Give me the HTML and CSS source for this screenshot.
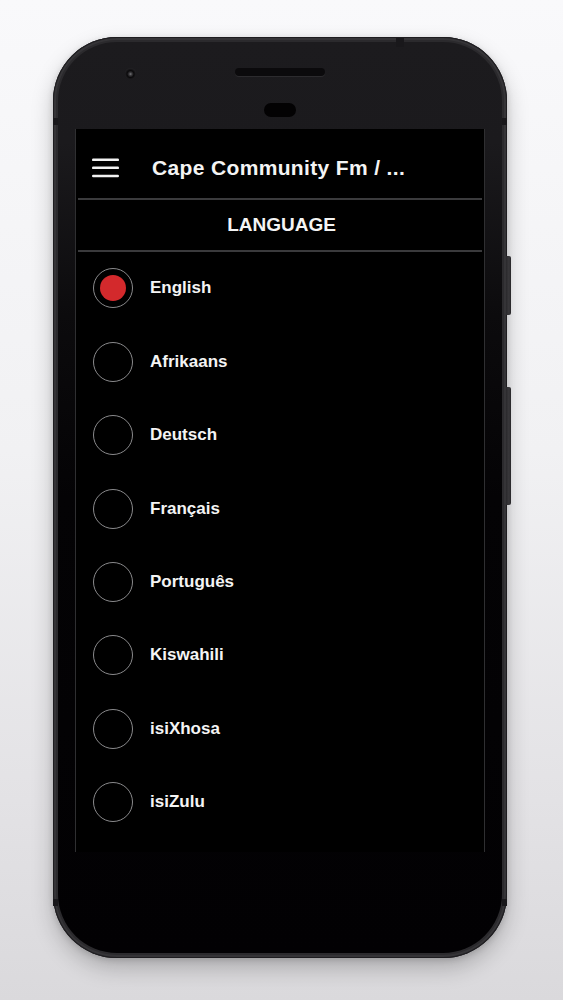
FILE: index.html
```html
<!DOCTYPE html>
<html lang="en">
<head>
<meta charset="utf-8">
<title>Language</title>
<link rel="stylesheet" href="styles.css">
</head>
<body>
<div class="stage">
  <div class="phone">
    <span class="btn btn-power"></span>
    <span class="btn btn-volume"></span>
    <span class="notch notch-top"></span>
    <span class="notch notch-l1"></span>
    <span class="notch notch-r1"></span>
    <span class="notch notch-l2"></span>
    <span class="notch notch-r2"></span>
    <div class="bezel">
      <div class="top-bezel">
        <span class="camera"></span>
        <span class="speaker"></span>
        <span class="sensor"></span>
      </div>
      <div class="screen">
        <div class="appbar">
          <svg class="menu-icon" width="27" height="20" viewBox="0 0 27 20">
            <rect x="0" y="0.5" width="27" height="2.6" rx="1.2" fill="#f2f2f2"/>
            <rect x="0" y="8.5" width="27" height="2.6" rx="1.2" fill="#f2f2f2"/>
            <rect x="0" y="16.7" width="27" height="2.6" rx="1.2" fill="#f2f2f2"/>
          </svg>
          <span class="title">Cape Community Fm / ...</span>
        </div>
        <div class="divider"></div>
        <div class="heading">LANGUAGE</div>
        <div class="divider thin"></div>
        <ul class="lang-list">
          <li class="lang selected"><span class="radio"><span class="dot"></span></span><span class="label">English</span></li>
          <li class="lang"><span class="radio"></span><span class="label">Afrikaans</span></li>
          <li class="lang"><span class="radio"></span><span class="label">Deutsch</span></li>
          <li class="lang"><span class="radio"></span><span class="label">Français</span></li>
          <li class="lang"><span class="radio"></span><span class="label">Português</span></li>
          <li class="lang"><span class="radio"></span><span class="label">Kiswahili</span></li>
          <li class="lang"><span class="radio"></span><span class="label">isiXhosa</span></li>
          <li class="lang"><span class="radio"></span><span class="label">isiZulu</span></li>
        </ul>
      </div>
    </div>
  </div>
</div>
</body>
</html>
```

FILE: styles.css
```css
* { box-sizing: border-box; }

html, body {
  margin: 0;
  padding: 0;
}

body {
  width: 563px;
  height: 1000px;
  overflow: hidden;
  background: linear-gradient(to bottom, #f9f9fb 0%, #f1f1f3 45%, #e3e2e5 80%, #dad9dc 100%);
  font-family: "Liberation Sans", Arial, sans-serif;
}

.stage {
  padding: 37px 0 0 53px;
}

.phone {
  position: relative;
  width: 454px;
  height: 921px;
  border-radius: 64px;
  padding: 5px;
  background: #2b2a2d;
  box-shadow: inset 0 0 0 1px #1e1d20, inset 0 0 0 3px #353437, 0 10px 22px rgba(0, 0, 0, 0.22), 0 2px 6px rgba(0, 0, 0, 0.15);
}

.bezel {
  width: 444px;
  height: 911px;
  border-radius: 59px;
  background: linear-gradient(to bottom, #1c1b1e 0%, #1b1a1d 11%, #0c0b0d 30%, #040305 50%, #020103 100%);
  display: flex;
  flex-direction: column;
  align-items: center;
  overflow: hidden;
}

.top-bezel {
  position: relative;
  width: 100%;
  height: 87px;
  display: flex;
  flex-direction: column;
  align-items: center;
  padding-top: 26px;
}

.camera {
  position: absolute;
  left: 67px;
  top: 26px;
  width: 11px;
  height: 11px;
  border-radius: 50%;
  background: radial-gradient(circle at 50% 55%, #7a7a7e 0, #3a393c 18%, #0a090b 42%, #262528 75%, #1b1a1d 100%);
}

.speaker {
  width: 90px;
  height: 8px;
  border-radius: 4px;
  background: #0b0a0c;
  box-shadow: 0 1px 0 #2c2b2e;
}

.sensor {
  width: 32px;
  height: 14px;
  border-radius: 7px;
  margin-top: 27px;
  background: #030203;
}

.screen {
  width: 410px;
  height: 723px;
  background: #000;
  border-left: 1px solid #2f2f31;
  border-right: 1px solid #2f2f31;
  color: #f4f4f4;
}

.appbar {
  height: 69px;
  padding: 8px 0 0 16px;
  display: flex;
  align-items: center;
}

.menu-icon {
  flex: none;
  display: block;
}

.title {
  margin-left: 33px;
  font-size: 21px;
  font-weight: bold;
  white-space: nowrap;
  letter-spacing: 0.35px;
}

.divider {
  height: 2px;
  margin: 0 2px;
  background: #3b3b3d;
}

.divider.thin {
  height: 1.5px;
  background: #3a3a3c;
}

.heading {
  height: 50px;
  display: flex;
  align-items: center;
  justify-content: center;
  font-size: 19px;
  font-weight: bold;
  padding-left: 3px;
}

.lang-list {
  list-style: none;
  margin: 0;
  padding: 0;
}

.lang {
  height: 73.45px;
  display: flex;
  align-items: center;
  padding-left: 17px;
}

.radio {
  flex: none;
  width: 40px;
  height: 40px;
  border-radius: 50%;
  border: 1.5px solid #8a8a8c;
  display: flex;
  align-items: center;
  justify-content: center;
}

.dot {
  width: 26px;
  height: 26px;
  border-radius: 50%;
  background: #d3292c;
}

.label {
  margin-left: 17px;
  font-size: 17px;
  font-weight: bold;
}

/* hardware details on the frame */
.btn {
  position: absolute;
  right: -4px;
  width: 5px;
  border-radius: 0 2px 2px 0;
  background: linear-gradient(to right, #2a292c, #3a393c 60%, #262528);
}

.btn-power {
  top: 219px;
  height: 59px;
}

.btn-volume {
  top: 350px;
  height: 118px;
}

.notch {
  position: absolute;
  background: #19181b;
}

.notch-top {
  left: 343px;
  top: 1px;
  width: 8px;
  height: 9px;
}

.notch-l1, .notch-l2 {
  left: 0;
  width: 5px;
  height: 7px;
}

.notch-r1, .notch-r2 {
  right: 0;
  width: 5px;
  height: 7px;
}

.notch-l1, .notch-r1 { top: 81px; }
.notch-l2, .notch-r2 { top: 862px; }
```
